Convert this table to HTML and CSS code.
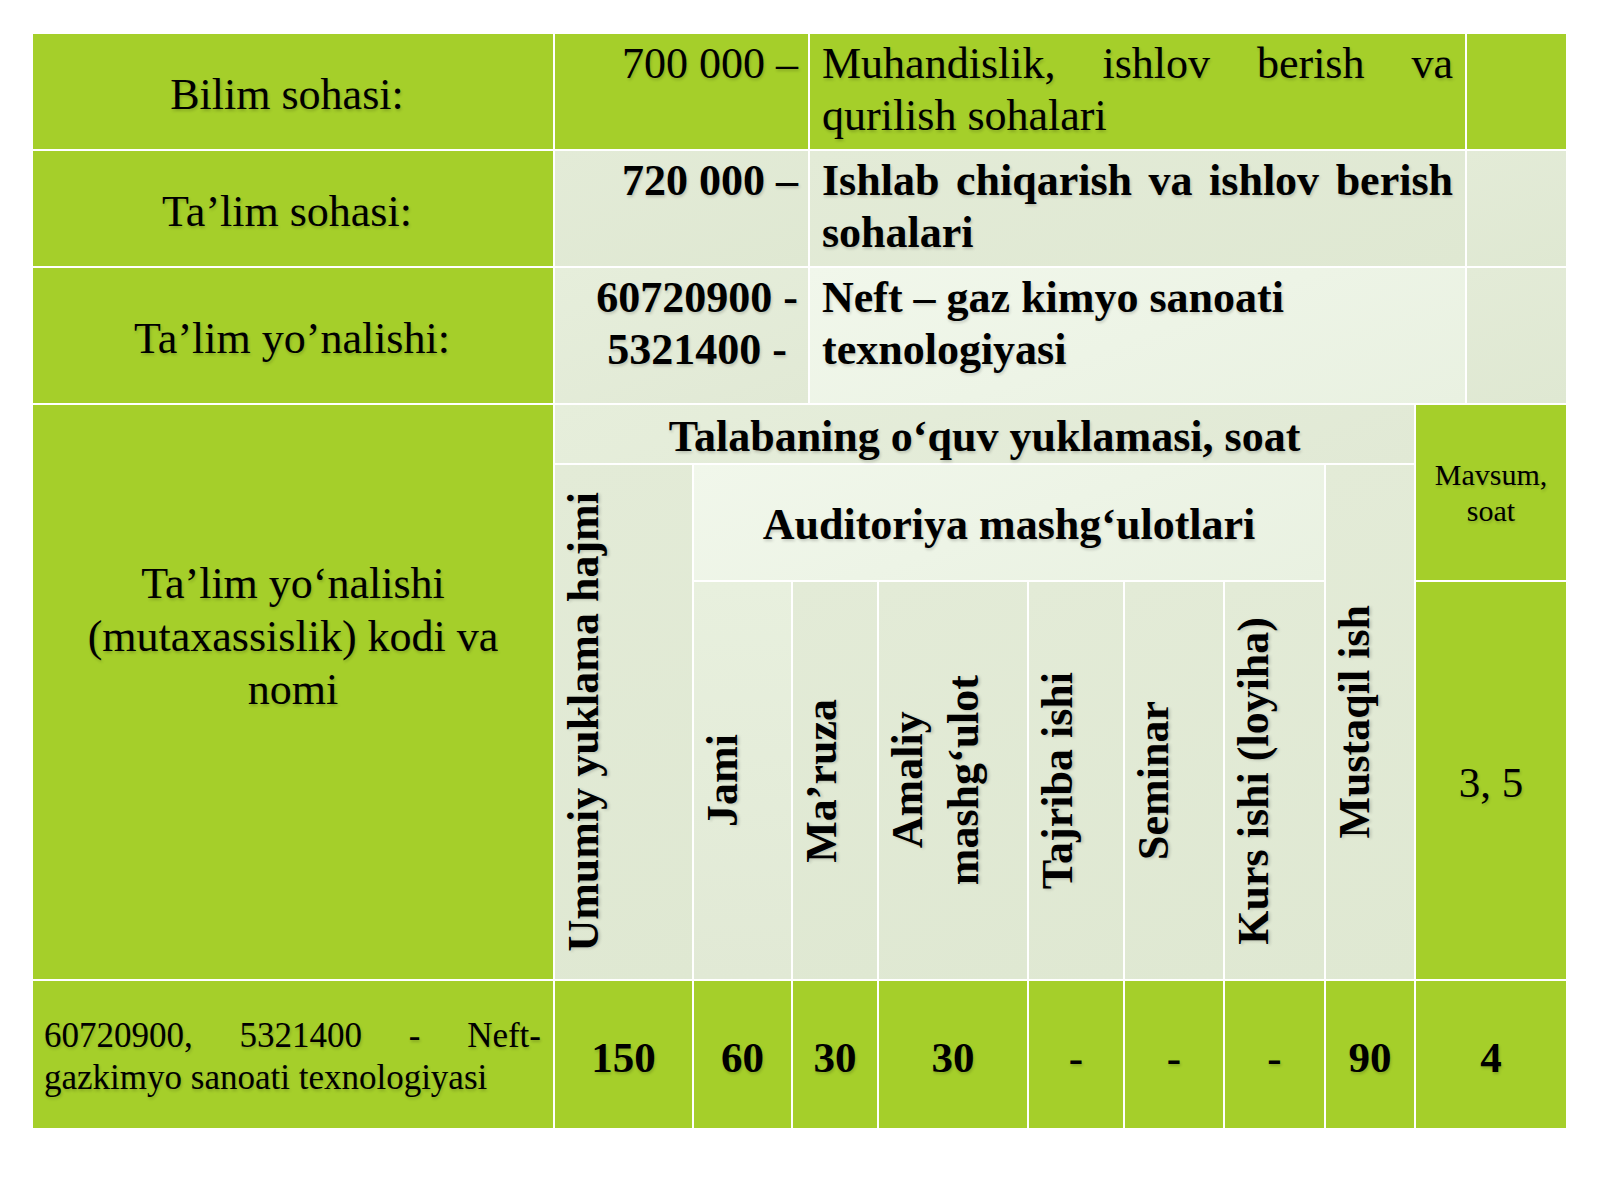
FILE: index.html
```html
<!DOCTYPE html>
<html lang="uz">
<head>
<meta charset="utf-8">
<title>O‘quv yuklamasi</title>
<link rel="stylesheet" href="styles.css">
</head>
<body>
<div class="table">
  <div class="top">
    <div class="cell green label">Bilim sohasi:</div>
    <div class="cell green code">700 000 –</div>
    <div class="cell green desc justify">Muhandislik, ishlov berish va qurilish sohalari</div>
    <div class="cell green"></div>

    <div class="cell green label">Ta’lim sohasi:</div>
    <div class="cell light code bold">720 000 –</div>
    <div class="cell light desc justify bold">Ishlab chiqarish va ishlov berish sohalari</div>
    <div class="cell light"></div>

    <div class="cell green label wide">Ta’lim yo’nalishi:</div>
    <div class="cell light2 code bold">60720900 -<br>5321400 -&nbsp;</div>
    <div class="cell pale desc bold">Neft – gaz kimyo sanoati texnologiyasi</div>
    <div class="cell light"></div>
  </div>

  <div class="bottom">
    <div class="cell green name">Ta’lim yo‘nalishi (mutaxassislik) kodi va nomi</div>
    <div class="cell light2 head span-load">Talabaning o‘quv yuklamasi, soat</div>
    <div class="cell green season">Mavsum,<br>soat</div>

    <div class="cell light rot total"><span>Umumiy yuklama hajmi</span></div>
    <div class="cell pale head aud">Auditoriya mashg‘ulotlari</div>
    <div class="cell light rot indep"><span>Mustaqil ish</span></div>

    <div class="cell light3 rot c3"><span>Jami</span></div>
    <div class="cell light rot c4"><span>Ma’ruza</span></div>
    <div class="cell light rot c5"><span>Amaliy<br>mashg‘ulot</span></div>
    <div class="cell light rot c6"><span>Tajriba ishi</span></div>
    <div class="cell light rot c7"><span>Seminar</span></div>
    <div class="cell light rot c8"><span>Kurs ishi (loyiha)</span></div>
    <div class="cell green value">3, 5</div>

    <div class="cell green rowtext">60720900, 5321400 - Neft-gazkimyo sanoati texnologiyasi</div>
    <div class="cell green num">150</div>
    <div class="cell green num">60</div>
    <div class="cell green num">30</div>
    <div class="cell green num">30</div>
    <div class="cell green num">-</div>
    <div class="cell green num">-</div>
    <div class="cell green num">-</div>
    <div class="cell green num">90</div>
    <div class="cell green num">4</div>
  </div>
</div>
</body>
</html>
```

FILE: styles.css
```css
html, body {
  margin: 0;
  padding: 0;
  background: #ffffff;
}

body {
  font-family: "Liberation Serif", "Times New Roman", serif;
  color: #000;
  width: 1600px;
  height: 1200px;
  overflow: hidden;
}

.table {
  margin: 34px 0 0 33px;
  width: 1533px;
  display: flex;
  flex-direction: column;
  gap: 2px;
}

.top {
  display: grid;
  grid-template-columns: 520px 253px 655px 99px;
  grid-template-rows: 115px 115px 135px;
  gap: 2px;
}

.bottom {
  display: grid;
  grid-template-columns: 520px 137px 97px 84px 148px 94px 98px 99px 88px 150px;
  grid-template-rows: 58px 115px 397px 147px;
  gap: 2px;
}

.cell {
  box-sizing: border-box;
  font-size: 44px;
  line-height: 52px;
  text-shadow: 1px 2px 3px rgba(0, 0, 0, 0.18);
}

.green { background: #a5cf2a; }
.light { background: linear-gradient(160deg, #e3ebd7 0%, #dfe8d2 100%); }
.light2 { background: linear-gradient(160deg, #e6eedb 0%, #e1e9d5 100%); }
.light3 { background: linear-gradient(180deg, #e8f0de 0%, #e1e9d5 100%); }
.pale { background: linear-gradient(160deg, #f1f7eb 0%, #e9f1e1 100%); }

.bold { font-weight: bold; }

.label {
  display: flex;
  align-items: center;
  justify-content: center;
  text-align: center;
  padding: 6px 12px 0 0;
}

.label.wide {
  padding-right: 2px;
}

.code {
  text-align: right;
  padding: 4px 10px 0 10px;
}

.desc {
  padding: 4px 12px 0 12px;
}

.justify {
  text-align: justify;
}

/* lower block placement */
.name {
  grid-column: 1;
  grid-row: 1 / 4;
  display: flex;
  align-items: center;
  justify-content: center;
  text-align: center;
  line-height: 53px;
  padding: 0 40px 112px;
}

.head {
  display: flex;
  align-items: center;
  justify-content: center;
  font-weight: bold;
  white-space: nowrap;
}

.span-load {
  grid-column: 2 / 10;
  grid-row: 1;
  padding-top: 5px;
}

.season {
  grid-column: 10;
  grid-row: 1 / 3;
  display: flex;
  align-items: center;
  justify-content: center;
  text-align: center;
  font-size: 30px;
  line-height: 36px;
  padding-bottom: 0;
}

.total {
  grid-column: 2;
  grid-row: 2 / 4;
}

.aud {
  grid-column: 3 / 9;
  grid-row: 2;
  padding-top: 4px;
}

.indep {
  grid-column: 9;
  grid-row: 2 / 4;
}

.c3 { grid-column: 3; grid-row: 3; }
.c4 { grid-column: 4; grid-row: 3; }
.c5 { grid-column: 5; grid-row: 3; }
.c6 { grid-column: 6; grid-row: 3; }
.c7 { grid-column: 7; grid-row: 3; }
.c8 { grid-column: 8; grid-row: 3; }

.value {
  grid-column: 10;
  grid-row: 3;
  display: flex;
  align-items: center;
  justify-content: center;
  font-size: 43px;
  padding-top: 4px;
}

.rot {
  display: flex;
  align-items: center;
  justify-content: flex-start;
  padding-left: 1px;
}

.rot span {
  writing-mode: vertical-rl;
  transform: rotate(180deg);
  text-align: center;
  white-space: nowrap;
  font-weight: bold;
  line-height: 56px;
  text-shadow: -1px 2px 3px rgba(0, 0, 0, 0.18);
}

.rowtext {
  grid-row: 4;
  display: flex;
  align-items: center;
  font-size: 35px;
  line-height: 42px;
  text-align: justify;
  padding: 4px 12px 0 11px;
}

.num {
  grid-row: 4;
  display: flex;
  align-items: center;
  justify-content: center;
  font-size: 43px;
  font-weight: bold;
  padding-top: 6px;
}
```
